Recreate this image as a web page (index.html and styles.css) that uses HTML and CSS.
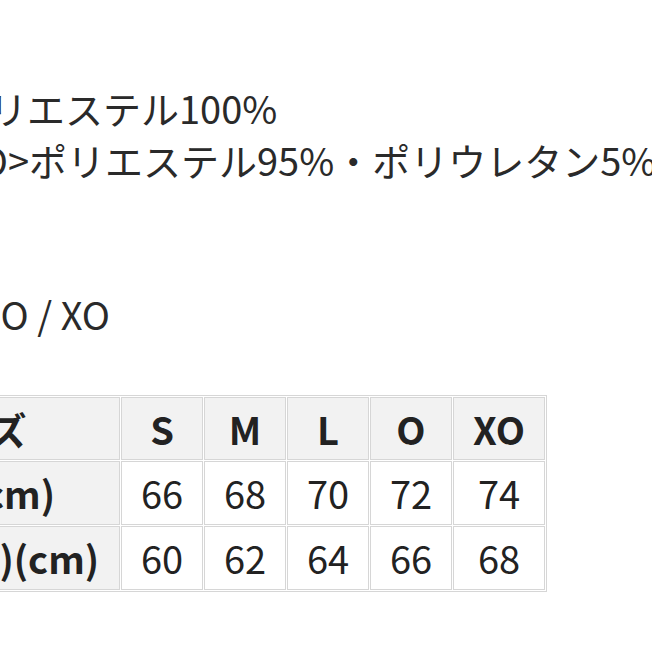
FILE: index.html
```html
<!DOCTYPE html>
<html lang="ja">
<head>
<meta charset="utf-8">
<title>サイズ表</title>
<link rel="stylesheet" href="styles.css">
</head>
<body>
<div class="page">
  <div class="material">
    <p class="line"><span class="pre pre-1">素材：&lt;S&gt;ポ</span>リエステル100%</p>
    <p class="line"><span class="pre pre-2">&lt;M～XO&gt;</span>ポリエステル95%・ポリウレタン5%</p>
  </div>
  <p class="line sizes"><span class="pre pre-3">S / M / L /</span> O / XO</p>
  <table class="size-table">
    <thead>
      <tr>
        <th class="label">サイズ</th>
        <th class="col">S</th>
        <th class="col">M</th>
        <th class="col">L</th>
        <th class="col">O</th>
        <th class="col wide">XO</th>
      </tr>
    </thead>
    <tbody>
      <tr>
        <th class="label">着丈 (cm)</th>
        <td>66</td><td>68</td><td>70</td><td>72</td><td>74</td>
      </tr>
      <tr>
        <th class="label">身幅 (1/2)(cm)</th>
        <td>60</td><td>62</td><td>64</td><td>66</td><td>68</td>
      </tr>
    </tbody>
  </table>
</div>
</body>
</html>
```
FILE: styles.css
```css
html, body {
  margin: 0;
  padding: 0;
  background: #ffffff;
}
body {
  width: 652px;
  height: 652px;
  overflow: hidden;
  font-family: "Noto Sans CJK JP", "Noto Sans", sans-serif;
  color: #2a2a2a;
}
.page {
  padding-top: 82px;
}
.material {
  margin-bottom: 102px;
}
.line {
  margin: 0;
  font-size: 38px;
  line-height: 52px;
  white-space: nowrap;
}
.pre {
  display: inline-block;
  width: 300px;
  text-align: right;
}
.pre-1 { margin-left: -311px; }
.pre-2 { margin-left: -271px; }
.pre-3 { margin-left: -308px; }

.size-table {
  margin-top: 55px;
  margin-left: -182px;
  table-layout: fixed;
  border-collapse: separate;
  border-spacing: 1px;
  border: 1px solid #d6d6d6;
  font-size: 38px;
  color: #222222;
}
.size-table th,
.size-table td {
  box-sizing: border-box;
  border: 1px solid #d6d6d6;
  padding: 0;
  text-align: center;
  vertical-align: middle;
  line-height: 1.2;
}
.size-table thead th {
  height: 63px;
  background: #f2f2f2;
  font-weight: 700;
}
.size-table tbody th,
.size-table tbody td {
  height: 64px;
}
.size-table td {
  background: #ffffff;
  font-weight: 400;
}
.size-table .label {
  width: 300px;
  background: #f2f2f2;
  font-weight: 700;
}
.size-table .col {
  width: 82px;
}
.size-table .wide {
  width: 92px;
}
```
